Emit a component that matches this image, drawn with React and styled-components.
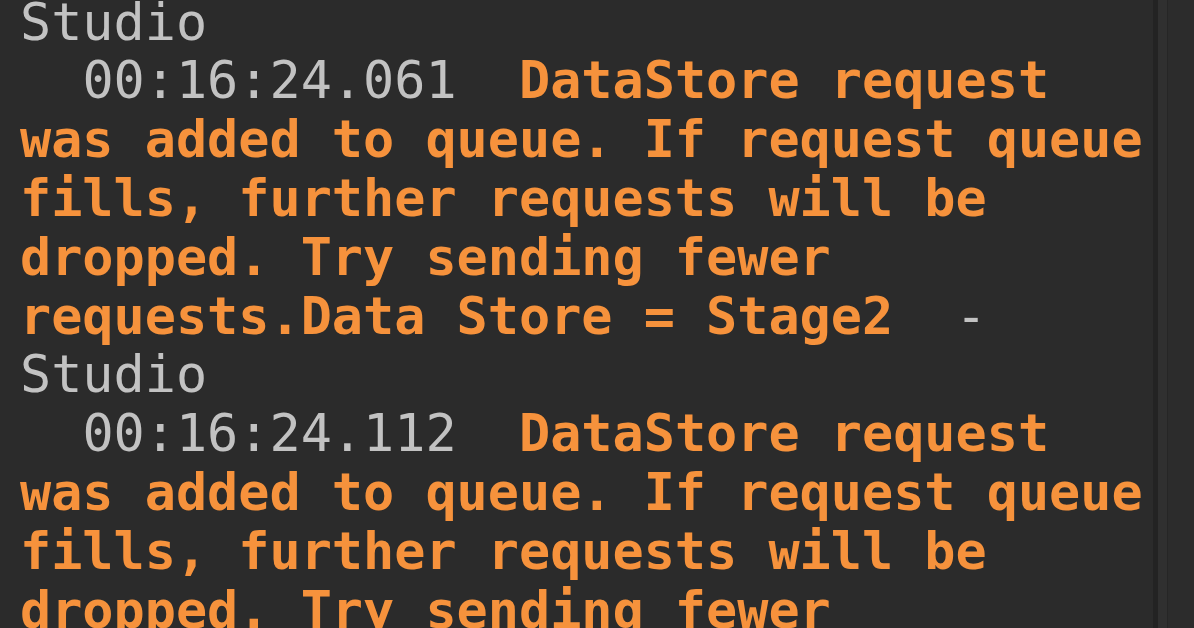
import styled, { createGlobalStyle } from "styled-components";

const LINE = 58.8;

const entries = [
  { time: "00:16:24.010", source: "Studio" },
  { time: "00:16:24.061", source: "Studio" },
  { time: "00:16:24.112", source: "Studio" },
];

const MESSAGE =
  "DataStore request was added to queue. If request queue fills, further requests will be dropped. Try sending fewer requests.Data Store = Stage2";

const App = () => {
  return (
    <>
      <GlobalStyle />
      <Window>
        <Viewport>
          <List>
            {entries.map((e) => (
              <Entry key={e.time}>
                <Muted>{"  " + e.time + "  "}</Muted>
                <Warning>{MESSAGE}</Warning>
                <Muted>{"  -  " + e.source}</Muted>
              </Entry>
            ))}
          </List>
        </Viewport>
        <Scrollbar>
          <Track />
        </Scrollbar>
      </Window>
    </>
  );
};

const GlobalStyle = createGlobalStyle`
  html, body {
    margin: 0;
    padding: 0;
    background: #2b2b2b;
  }
`;

const Window = styled.div`
  display: flex;
  width: 1194px;
  height: 628px;
  overflow: hidden;
  background: #2b2b2b;
`;

const Viewport = styled.div`
  flex: 1;
  overflow: hidden;
  padding-left: 20px;
`;

const List = styled.div`
  /* scrolled: previous entry's last line peeks in at the top */
  margin-top: ${-(5 * LINE + 7.4)}px;
`;

const Entry = styled.p`
  margin: 0;
  width: 36ch;
  font-family: "DejaVu Sans Mono", "Liberation Mono", monospace;
  font-size: 51.8px;
  line-height: ${LINE}px;
  white-space: pre-wrap;
`;

const Muted = styled.span`
  color: #c2c2c2;
  font-weight: 400;
`;

const Warning = styled.span`
  color: #f6923c;
  font-weight: 700;
`;

const Scrollbar = styled.div`
  width: 36px;
  display: flex;
  border-left: 5px solid #232323;
  background: #2c2c2c;
`;

const Track = styled.div`
  width: 9px;
  background: #303030;
  border-right: 1px solid #262626;
`;

export default App;
